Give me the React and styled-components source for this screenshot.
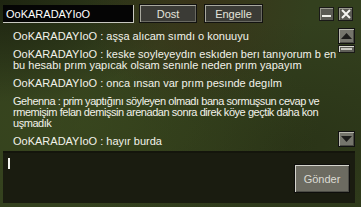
import React from 'react'
import styled, { createGlobalStyle } from 'styled-components'

const GlobalStyle = createGlobalStyle`
  html, body {
    margin: 0;
    padding: 0;
    background: #2f3a1c;
  }
  * {
    box-sizing: border-box;
  }
`

const Window = styled.div`
  position: relative;
  width: 361px;
  height: 207px;
  display: flex;
  flex-direction: column;
  overflow: hidden;
  font-family: 'Liberation Sans', Arial, sans-serif;
  font-size: 11px;
  color: #f2f2ea;
  background:
    radial-gradient(ellipse at 55% 0%, rgba(62, 44, 22, 0.6), transparent 40%),
    radial-gradient(ellipse at 0% 0%, rgba(20, 24, 10, 0.7), transparent 35%),
    radial-gradient(ellipse at 25% 60%, rgba(60, 74, 30, 0.6), transparent 60%),
    radial-gradient(ellipse at 80% 70%, rgba(38, 46, 20, 0.7), transparent 60%),
    #33401e;
`

const TopBar = styled.div`
  display: flex;
  align-items: center;
  height: 24px;
  padding: 3px 8px 0 3px;
`

const NameBox = styled.div`
  width: 131px;
  height: 18px;
  background: #050505;
  border-right: 1px solid #c8c8c0;
  border-bottom: 1px solid #c8c8c0;
  padding: 2px 0 0 3px;
  font-size: 11px;
  color: #ffffff;
  line-height: 14px;
`

const Button = styled.div`
  display: flex;
  align-items: center;
  justify-content: center;
  width: ${(p) => p.$w}px;
  height: 19px;
  margin-left: ${(p) => p.$ml}px;
  background: #3b3b36;
  border: 1px solid #121210;
  box-shadow: inset 1px 1px 0 #a8a89e, inset -1px -1px 0 #6a6a62;
  color: #e4e4dc;
  font-size: 11px;
`

const Spacer = styled.div`
  flex: 1;
`

const WinButton = styled.div`
  width: 15px;
  height: 14px;
  margin-left: ${(p) => p.$ml}px;
  display: flex;
  align-items: center;
  justify-content: center;
  background: #5a5a53;
  border: 1px solid #1a1a18;
  box-shadow: inset 1px 1px 0 #9a9a90;
`

const Body = styled.div`
  flex: 1;
  display: flex;
  min-height: 0;
`

const Messages = styled.div`
  flex: 1;
  padding: 7px 0 0 13px;
  display: flex;
  flex-direction: column;
  gap: 7px;
`

const Message = styled.div`
  line-height: 11px;
  white-space: pre;
  letter-spacing: ${(p) => (p.$tight ? '-0.45px' : '0')};
`

const ScrollCol = styled.div`
  width: 24px;
  padding: 4px 6px 3px 1px;
  display: flex;
  flex-direction: column;
`

const ScrollBtn = styled.div`
  width: 17px;
  height: 16px;
  background: #75756c;
  border: 1px solid #111;
  box-shadow: inset 1px 1px 0 #b8b8ae, inset -1px -1px 0 #4a4a44;
  display: flex;
  align-items: center;
  justify-content: center;
`

const Thumb = styled.div`
  width: 17px;
  height: 8px;
  margin-top: 1px;
  background: #5f5f58;
  border: 1px solid #1a1a18;
  box-shadow: inset 1px 1px 0 #d8d8d0;
  padding: 2px 2px;
  & > div {
    height: 2px;
    background: #c8c8c0;
  }
`

const ScrollGap = styled.div`
  flex: 1;
`

const InputArea = styled.div`
  height: 52px;
  margin: 1px 6px 4px 3px;
  background: #1a1c10;
  border-top: 2px solid #14150c;
  display: flex;
  align-items: flex-start;
  justify-content: space-between;
  padding: 5px 5px 0 5px;
`

const Caret = styled.div`
  width: 2px;
  height: 11px;
  background: #f4f4f0;
`

const SendButton = styled.div`
  width: 56px;
  height: 29px;
  margin-top: 6px;
  display: flex;
  align-items: center;
  justify-content: center;
  background: #6c6b61;
  border: 1px solid #0e0e0c;
  box-shadow: inset 1px 1px 0 #d4d4cc, inset -1px -1px 0 #4c4c46;
  color: #dcdcd4;
  font-size: 11px;
`

const messages = [
  { text: 'OoKARADAYIoO : aşşa alıcam sımdı o konuuyu' },
  { text: 'OoKARADAYIoO : keske soyleyeydın eskıden berı tanıyorum b en\nbu hesabı prım yapıcak olsam senınle neden prım yapayım' },
  { text: 'OoKARADAYIoO : onca ınsan var prım pesınde degılm' },
  {
    text: 'Gehenna : prim yaptığını söyleyen olmadı bana sormuşsun cevap ve\nrmemişim felan demişsin arenadan sonra direk köye geçtik daha kon\nuşmadık',
    tight: true,
  },
  { text: 'OoKARADAYIoO : hayır burda' },
]

const App = () => {
  return (
    <>
      <GlobalStyle />
      <Window>
        <TopBar>
          <NameBox>OoKARADAYIoO</NameBox>
          <Button $w={58} $ml={5}>Dost</Button>
          <Button $w={59} $ml={7}>Engelle</Button>
          <Spacer />
          <WinButton $ml={0}>
            <svg width='9' height='9' viewBox='0 0 9 9'>
              <rect x='0' y='6' width='9' height='2' fill='#f0f0ea' />
            </svg>
          </WinButton>
          <WinButton $ml={4}>
            <svg width='10' height='10' viewBox='0 0 10 10'>
              <path d='M1 1 L9 9 M9 1 L1 9' stroke='#f4f4f0' strokeWidth='2' />
            </svg>
          </WinButton>
        </TopBar>
        <Body>
          <Messages>
            {messages.map((m, i) => (
              <Message key={i} $tight={m.tight}>{m.text}</Message>
            ))}
          </Messages>
          <ScrollCol>
            <ScrollBtn>
              <svg width='11' height='6' viewBox='0 0 11 6'>
                <polygon points='0,6 11,6 5.5,0' fill='#1c1c1a' />
              </svg>
            </ScrollBtn>
            <Thumb>
              <div />
            </Thumb>
            <ScrollGap />
            <ScrollBtn>
              <svg width='11' height='6' viewBox='0 0 11 6'>
                <polygon points='0,0 11,0 5.5,6' fill='#1c1c1a' />
              </svg>
            </ScrollBtn>
          </ScrollCol>
        </Body>
        <InputArea>
          <Caret />
          <SendButton>Gönder</SendButton>
        </InputArea>
      </Window>
    </>
  )
}

export default App
